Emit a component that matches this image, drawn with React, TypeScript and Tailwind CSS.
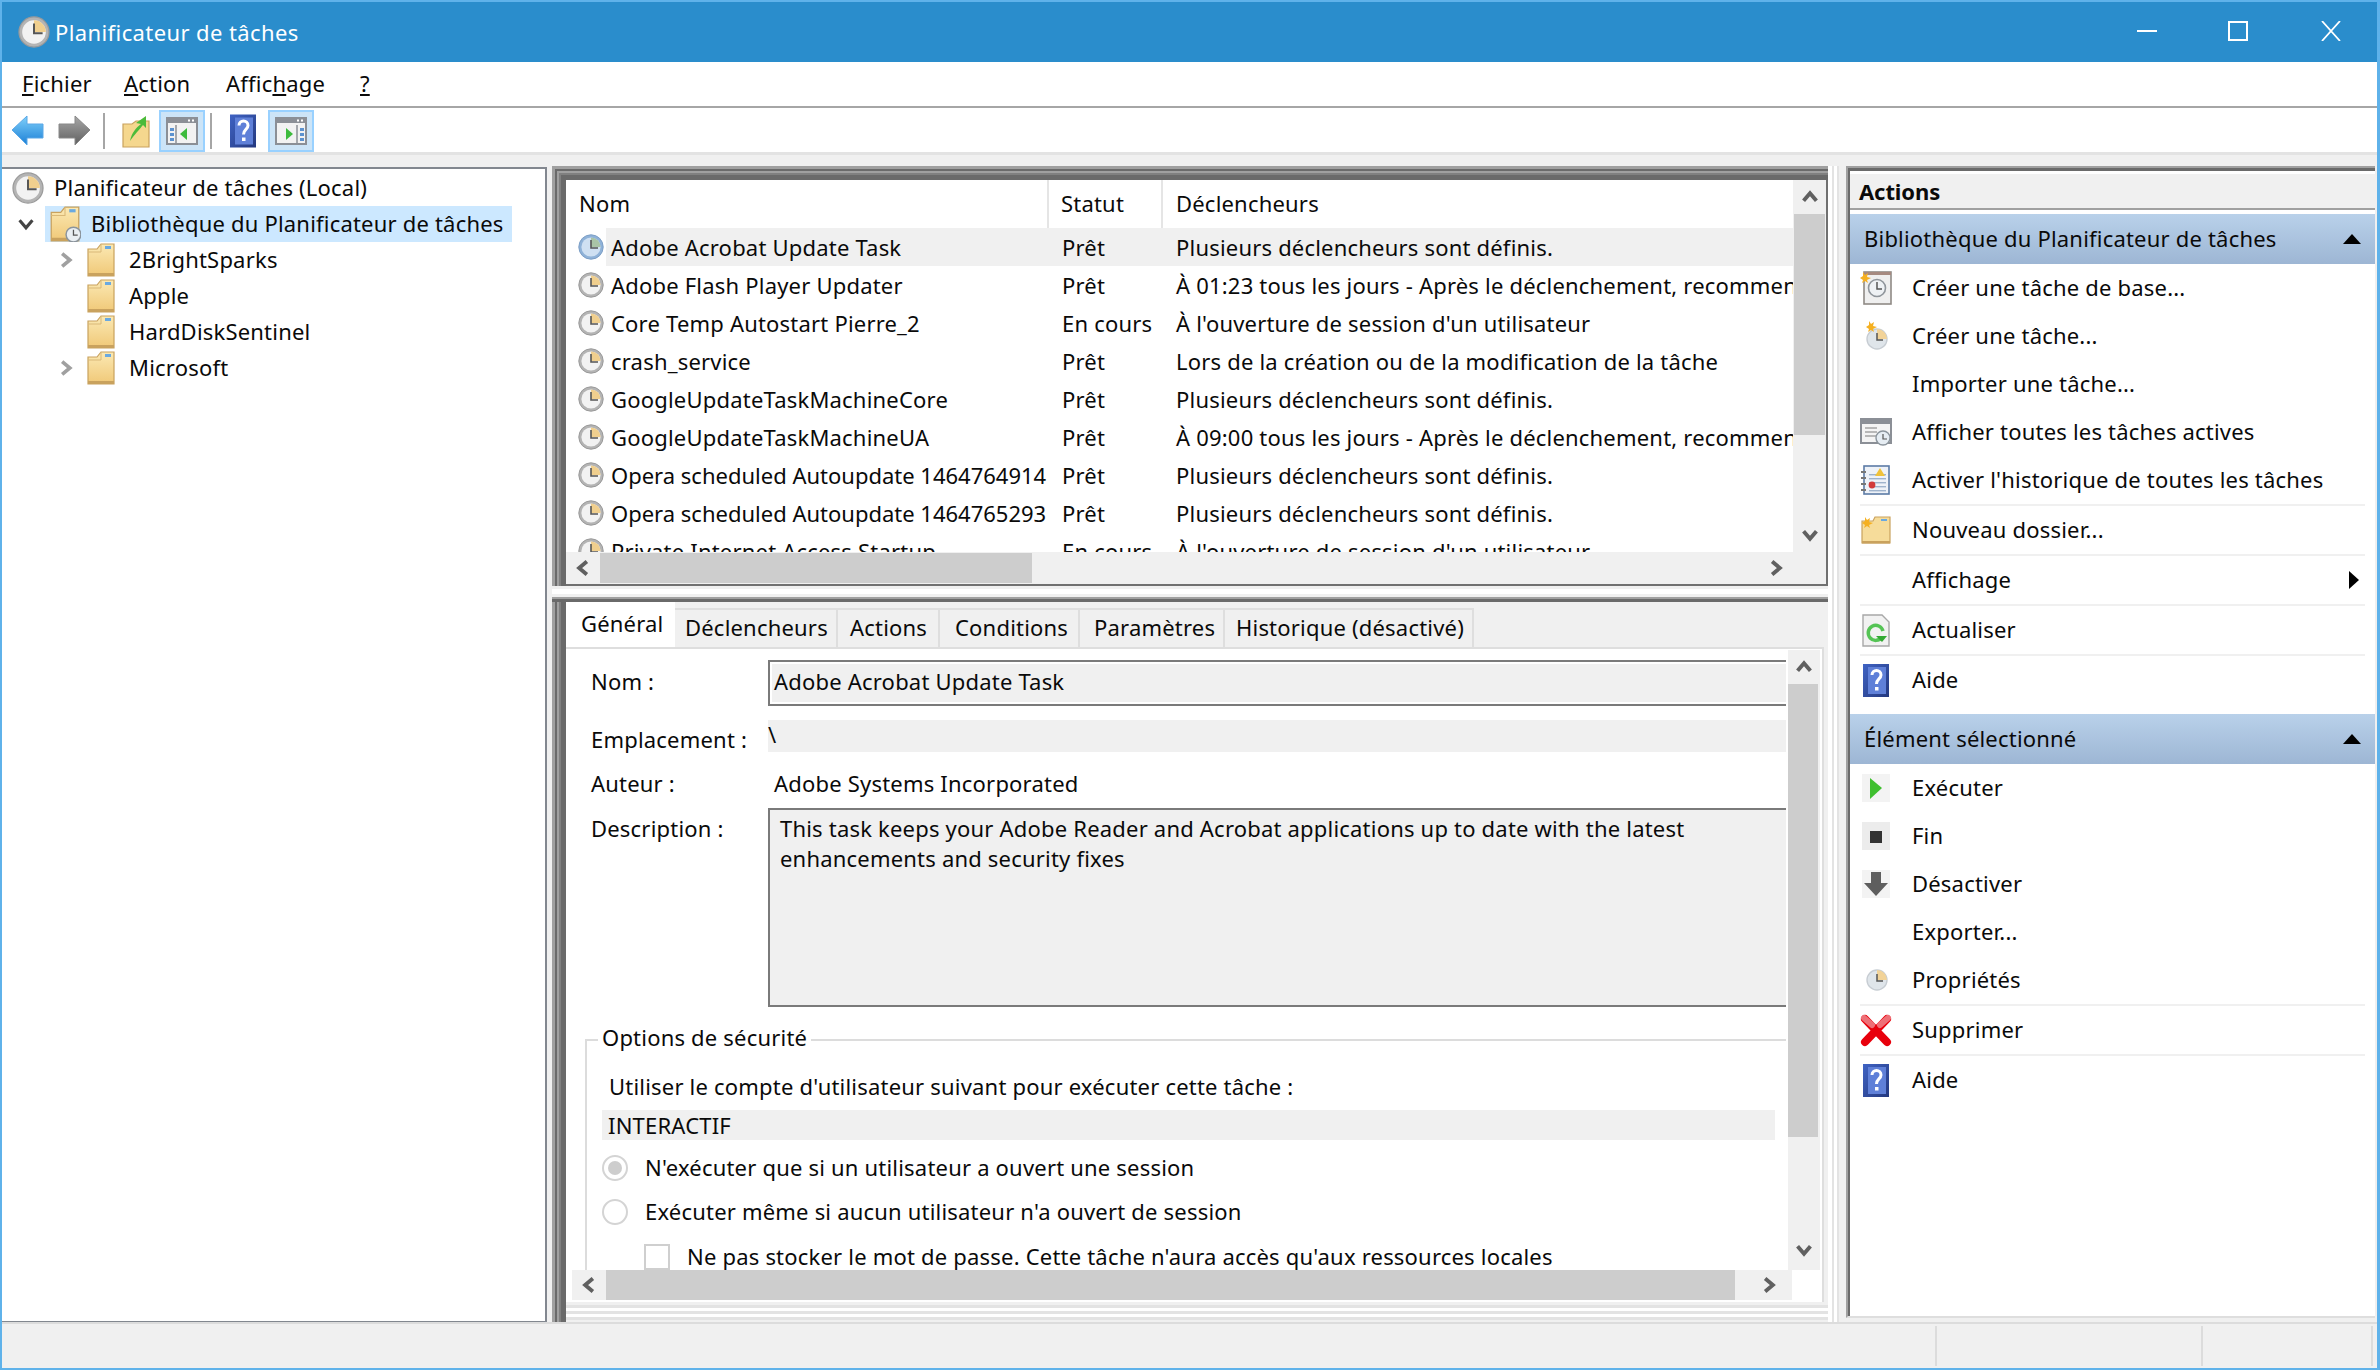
import React from "react";

const Clock = ({ size = 26, blue = false, className = "" }: { size?: number; blue?: boolean; className?: string }) => (
  <svg width={size} height={size} viewBox="0 0 26 26" className={"shrink-0 " + className}>
    <circle cx="13" cy="13" r="12.2" fill={blue ? "#8fb2d8" : "#b4b4b4"} stroke={blue ? "#7d9fc6" : "#9a9a9a"} strokeWidth="1" />
    <circle cx="13" cy="13" r="9.6" fill={blue ? "#cfe0f2" : "#f2f2f2"} />
    <path d="M13 3.4 A9.6 9.6 0 0 1 22.6 13 L13 13 Z" fill={blue ? "#a9c4a6" : "#f0cf8e"} />
    <path d="M13 6 V14 H20" fill="none" stroke="#555" strokeWidth="1.6" />
  </svg>
);

const Folder = ({ w = 28, h = 34, clock = false }: { w?: number; h?: number; clock?: boolean }) => (
  <svg width={w} height={h} viewBox="0 0 28 34" className="shrink-0">
    <defs>
      <linearGradient id="fold" x1="0" y1="0" x2="0" y2="1">
        <stop offset="0" stopColor="#fbe9b4" />
        <stop offset="1" stopColor="#f0c877" />
      </linearGradient>
    </defs>
    <path d="M1 6 L10 6 L14 1 H27 V33 H1 Z" fill="url(#fold)" stroke="#c9a25e" strokeWidth="1.2" />
    <path d="M1 9 L14 9 L14 1" fill="none" stroke="#d9b878" strokeWidth="1" />
    <rect x="18" y="3" width="6" height="3" fill="#6aa9e0" />
    <rect x="1" y="30" width="26" height="3" fill="#c9a25e" />
    {clock && <circle cx="22" cy="27" r="7" fill="#e9eef2" stroke="#8b949c" strokeWidth="1.4" />}
    {clock && <path d="M22 22.5 V27.5 H26" fill="none" stroke="#555" strokeWidth="1.2" />}
  </svg>
);

const HelpIcon = ({ w = 26, h = 33 }: { w?: number; h?: number }) => (
  <svg width={w} height={h} viewBox="0 0 26 33" className="shrink-0">
    <defs>
      <linearGradient id="hb" x1="0" y1="0" x2="1" y2="1">
        <stop offset="0" stopColor="#3f63c4" />
        <stop offset="1" stopColor="#24387e" />
      </linearGradient>
    </defs>
    <rect width="26" height="33" fill="url(#hb)" />
    <rect x="5" y="3" width="18" height="27" fill="#5f80d8" />
    <path d="M9 11 C9 5 18 5 18 11 C18 15 13.5 15 13.5 20" fill="none" stroke="#fff" strokeWidth="3" />
    <rect x="12" y="23" width="3.5" height="3.5" fill="#fff" />
  </svg>
);

const Arrow = ({ dir, blue = false }: { dir: "left" | "right"; blue?: boolean }) => (
  <svg width="32" height="32" viewBox="0 0 32 32" className="shrink-0">
    <defs>
      <linearGradient id="ab" x1="0" y1="0" x2="0" y2="1">
        <stop offset="0" stopColor="#7fd0fa" />
        <stop offset="1" stopColor="#1b7fd6" />
      </linearGradient>
      <linearGradient id="ag" x1="0" y1="0" x2="0" y2="1">
        <stop offset="0" stopColor="#a8a8a8" />
        <stop offset="1" stopColor="#5f5f5f" />
      </linearGradient>
    </defs>
    <path
      d={dir === "left" ? "M0 15 L15 1 V9 H31 V23 H15 V30 Z" : "M32 15 L17 1 V9 H1 V23 H17 V30 Z"}
      fill={blue ? "url(#ab)" : "url(#ag)"}
      stroke={blue ? "#5aa7e6" : "#888"}
      strokeWidth="1"
    />
  </svg>
);

const PaneIcon = ({ flip = false }: { flip?: boolean }) => (
  <svg width="32" height="28" viewBox="0 0 32 28" className="shrink-0">
    <rect x="1" y="1" width="30" height="26" fill="#f2f2f2" stroke="#8b8f96" strokeWidth="2" />
    <rect x="1" y="1" width="30" height="5" fill="#8b8f96" />
    <rect x="22" y="2.5" width="2" height="2" fill="#fff" />
    <rect x="26" y="2.5" width="2" height="2" fill="#fff" />
    <path d={flip ? "M22 8 V26" : "M10 8 V26"} stroke="#8b8f96" strokeWidth="1.5" />
    {[11, 16, 21].map((y) => (
      <rect key={y} x={flip ? 25 : 4} y={y} width="4" height="3" fill="#5c92cf" />
    ))}
    <path d={flip ? "M11 11 L18 17 L11 23 Z" : "M21 11 L14 17 L21 23 Z"} fill="#3dbb3d" />
  </svg>
);

const Chev = ({ dir, size = 14, color = "#606060", w = 3 }: { dir: "up" | "down" | "left" | "right"; size?: number; color?: string; w?: number }) => {
  const p = { up: "M2 10 L7 4 L12 10", down: "M2 4 L7 10 L12 4", left: "M10 2 L4 7 L10 12", right: "M4 2 L10 7 L4 12" }[dir];
  return (
    <svg width={size} height={size} viewBox="0 0 14 14" className="shrink-0">
      <path d={p} fill="none" stroke={color} strokeWidth={w} />
    </svg>
  );
};

const Tree = ({ depth, chev, icon, label, selected }: { depth: number; chev?: "right" | "down"; icon: React.ReactNode; label: string; selected?: boolean }) => (
  <div className="h-[36px] flex items-center">
    {depth === 0 && <div className="w-[10px]" />}
    {depth === 1 && (
      <div className="w-[43px] pl-[15px] flex items-center">
        <Chev dir="down" size={18} color="#444" w={2.4} />
      </div>
    )}
    {depth === 2 && (
      <div className="w-[85px] pl-[55px] flex items-center">
        {chev && <Chev dir="right" size={18} color="#a0a0a0" w={2.8} />}
      </div>
    )}
    <div className={"flex items-center h-[36px] " + (selected ? "bg-[#cce8ff] w-[467px]" : "")}>
      {selected && <div className="w-[4px]" />}
      {icon}
      <span className={"pb-[2px] " + (depth === 2 ? "ml-[14px]" : "ml-[10px]")}>{label}</span>
    </div>
  </div>
);

const tasks = [
  ["Adobe Acrobat Update Task", "Prêt", "Plusieurs déclencheurs sont définis."],
  ["Adobe Flash Player Updater", "Prêt", "À 01:23 tous les jours - Après le déclenchement, recommencer toutes les 1 heure"],
  ["Core Temp Autostart Pierre_2", "En cours", "À l'ouverture de session d'un utilisateur"],
  ["crash_service", "Prêt", "Lors de la création ou de la modification de la tâche"],
  ["GoogleUpdateTaskMachineCore", "Prêt", "Plusieurs déclencheurs sont définis."],
  ["GoogleUpdateTaskMachineUA", "Prêt", "À 09:00 tous les jours - Après le déclenchement, recommencer toutes les 1 heure"],
  ["Opera scheduled Autoupdate 1464764914", "Prêt", "Plusieurs déclencheurs sont définis."],
  ["Opera scheduled Autoupdate 1464765293", "Prêt", "Plusieurs déclencheurs sont définis."],
  ["Private Internet Access Startup", "En cours", "À l'ouverture de session d'un utilisateur"],
];

const Stripes = ({ children, className = "" }: { children: React.ReactNode; className?: string }) => (
  <div className={"border-t-[3px] border-l-[3px] border-[#a0a0a0] " + className}>
    <div className="border-t-2 border-l-2 border-[#6a6a6a] h-full">
      <div className="border-t-2 border-l-2 border-[#a0a0a0] h-full">
        <div className="border-t-2 border-l-2 border-[#808080] h-full">
          <div className="border-t-[5px] border-l-[5px] border-[#6a6a6a] h-full">{children}</div>
        </div>
      </div>
    </div>
  </div>
);

const TaskList = () => (
  <div className="h-[406px] w-[1262px] border-r-2 border-b-2 border-[#707070] flex flex-col bg-[#f0f0f0]">
    <div className="flex h-[372px]">
      <div className="w-[1227px] bg-white overflow-hidden">
        <div className="flex h-[48px] items-center">
          <div className="w-[483px] pl-[13px] pb-[2px] h-full flex items-center border-r-2 border-[#e5e5e5]">Nom</div>
          <div className="w-[114px] pl-[12px] pb-[2px] h-full flex items-center border-r-2 border-[#e5e5e5]">Statut</div>
          <div className="flex-1 pl-[13px] pb-[2px]">Déclencheurs</div>
        </div>
        {tasks.map((t, i) => (
          <div key={t[0]} className="flex h-[38px] items-center whitespace-nowrap overflow-hidden">
            <div className="w-[40px] pl-[12px] flex items-center h-full">
              <Clock blue={i === 0} />
            </div>
            <div className={"flex-1 flex items-center h-full min-w-0 overflow-hidden " + (i === 0 ? "bg-[#f0f0f0]" : "")}>
              <div className={"w-[443px] pl-[5px] shrink-0 " + (i === 6 || i === 7 ? "tracking-[0px]" : "")}>{t[0]}</div>
              <div className="w-[114px] pl-[13px] shrink-0">{t[1]}</div>
              <div className="pl-[13px] shrink-0">{t[2]}</div>
            </div>
          </div>
        ))}
      </div>
      <div className="w-[33px] flex flex-col">
        <div className="h-[34px] flex items-center justify-center"><Chev dir="up" size={18} /></div>
        <div className="h-[221px] bg-[#cdcdcd] mx-[1px]" />
        <div className="flex-1" />
        <div className="h-[34px] flex items-center justify-center"><Chev dir="down" size={18} /></div>
      </div>
    </div>
    <div className="h-[32px] flex items-center">
      <div className="w-[34px] flex items-center justify-center"><Chev dir="left" size={18} /></div>
      <div className="w-[432px] h-[30px] bg-[#cdcdcd]" />
      <div className="w-[735px]" />
      <Chev dir="right" size={18} />
    </div>
  </div>
);

const Tab = ({ label, w, pl }: { label: string; w: number; pl: number }) => (
  <div style={{ width: w, paddingLeft: pl }} className="h-[39px] border-r-2 border-t-2 border-[#dedede] flex items-center pb-[2px] shrink-0">
    {label}
  </div>
);

const Field = ({ className, children }: { className: string; children: React.ReactNode }) => (
  <div className={"flex " + className}>{children}</div>
);

const Radio = ({ on = false }: { on?: boolean }) => (
  <span className="w-[26px] h-[26px] rounded-full border-2 border-[#d4d4d4] flex items-center justify-center shrink-0">
    {on && <span className="w-[14px] h-[14px] rounded-full bg-[#cdcdcd]" />}
  </span>
);

const TaskDetail = () => (
  <div className="h-[721px] w-[1262px] flex flex-col">
    <div className="h-[45px] flex items-end bg-[#f0f0f0] shrink-0">
      <div className="h-[45px] w-[109px] bg-white pl-[15px] pt-[5px] shrink-0">Général</div>
      <Tab label="Déclencheurs" w={163} pl={10} />
      <Tab label="Actions" w={102} pl={12} />
      <Tab label="Conditions" w={140} pl={15} />
      <Tab label="Paramètres" w={145} pl={14} />
      <Tab label="Historique (désactivé)" w={249} pl={11} />
    </div>
    <div className="h-[655px] w-[1258px] bg-white border-t-2 border-r-2 border-[#dedede] flex flex-col shrink-0">
      <div className="flex h-[621px] pt-[1px] shrink-0">
        <div className="w-[1222px] overflow-hidden">
          <Field className="mt-[10px] h-[46px] items-center">
            <div className="w-[202px] pl-[25px] pb-[3px] shrink-0">Nom :</div>
            <div className="w-[1018px] h-[46px] border-t-2 border-b-2 border-l-2 border-[#7a7a7a] p-[2px] pr-0 shrink-0">
              <div className="h-full bg-[#f0f0f0] pl-[2px] pb-[3px] flex items-center">Adobe Acrobat Update Task</div>
            </div>
          </Field>
          <Field className="mt-[14px] h-[32px] items-center">
            <div className="w-[202px] pl-[25px] shrink-0 pt-[6px]">Emplacement :</div>
            <div className="w-[1018px] h-[32px] bg-[#f0f0f0] flex items-center shrink-0 pb-[4px]">\</div>
          </Field>
          <Field className="mt-[16px] h-[32px] items-center">
            <div className="w-[202px] pl-[25px] pb-[2px] shrink-0">Auteur :</div>
            <div className="pl-[6px] pb-[2px]">Adobe Systems Incorporated</div>
          </Field>
          <Field className="mt-[8px] h-[199px]">
            <div className="w-[202px] pl-[25px] pt-[4px] shrink-0">Description :</div>
            <div className="w-[1018px] h-[199px] border-t-2 border-b-2 border-l-2 border-[#7a7a7a] bg-[#f0f0f0] pl-[10px] pt-[3px] leading-[30px] shrink-0">
              This task keeps your Adobe Reader and Acrobat applications up to date with the latest
              <br />
              enhancements and security fixes
            </div>
          </Field>
          <div className="mt-[32px] ml-[19px] w-[1201px] border-t-2 border-l-2 border-[#dcdcdc] relative h-[240px]">
            <div className="absolute left-[11px] -top-[19px] bg-white px-[4px] leading-[30px]">Options de sécurité</div>
            <div className="mt-[30px] ml-[22px] h-[30px] flex items-center">Utiliser le compte d'utilisateur suivant pour exécuter cette tâche :</div>
            <div className="mt-[9px] ml-[15px] w-[1173px] h-[30px] bg-[#f0f0f0] pl-[6px] flex items-center">INTERACTIF</div>
            <div className="mt-[13px] ml-[15px] h-[30px] flex items-center gap-[17px]"><Radio on /><span className="pb-[1px]">N'exécuter que si un utilisateur a ouvert une session</span></div>
            <div className="mt-[14px] ml-[15px] h-[30px] flex items-center gap-[17px]"><Radio /><span className="pb-[1px]">Exécuter même si aucun utilisateur n'a ouvert de session</span></div>
            <div className="mt-[17px] ml-[57px] h-[26px] flex items-center gap-[17px]">
              <span className="w-[26px] h-[26px] border-2 border-[#cfcfcf] shrink-0" />
              <span className="pb-[2px]">Ne pas stocker le mot de passe. Cette tâche n'aura accès qu'aux ressources locales</span>
            </div>
          </div>
        </div>
        <div className="w-[32px] h-[620px] bg-[#f0f0f0] flex flex-col shrink-0">
          <div className="h-[34px] flex items-center justify-center"><Chev dir="up" size={18} /></div>
          <div className="h-[453px] bg-[#cdcdcd] mr-[2px]" />
          <div className="flex-1" />
          <div className="h-[34px] mb-[3px] flex items-center justify-center"><Chev dir="down" size={18} /></div>
        </div>
      </div>
      <div className="h-[30px] flex items-center w-[1220px] bg-[#f0f0f0] ml-[6px] shrink-0">
        <div className="w-[34px] flex justify-center"><Chev dir="left" size={18} /></div>
        <div className="w-[1129px] h-[30px] bg-[#cdcdcd]" />
        <div className="w-[25px]" />
        <Chev dir="right" size={18} />
      </div>
    </div>
    <div className="h-[3px] bg-[#f0f0f0] shrink-0" />
    <div className="h-[3px] bg-[#e3e3e3] shrink-0" />
    <div className="h-[3px] bg-white shrink-0" />
    <div className="h-[3px] bg-[#e3e3e3] shrink-0" />
    <div className="h-[3px] bg-white shrink-0" />
    <div className="h-[3px] bg-[#e3e3e3] shrink-0" />
  </div>
);

const IconBox = ({ children }: { children?: React.ReactNode }) => (
  <div className="w-[32px] h-[34px] flex items-center justify-center shrink-0">{children}</div>
);

const Spark = () => <path d="M3 1 L5 4 L8 2 L7 6 L11 7 L7 9 L8 12 L5 10 L2 12 L3 9 L0 7 L3 5 Z" fill="#f5b021" />;

const IconBase = () => (
  <svg width="32" height="34" viewBox="0 0 32 34">
    <rect x="4" y="1" width="27" height="32" fill="#efefef" stroke="#8f8a85" strokeWidth="1.6" />
    <rect x="4" y="1" width="27" height="3" fill="#a68a80" />
    <circle cx="17" cy="17" r="8.5" fill="#eef1f4" stroke="#8f959b" strokeWidth="1.6" />
    <path d="M17 11 V18 H22" fill="none" stroke="#555" strokeWidth="1.5" />
    <Spark />
  </svg>
);
const IconTask = () => (
  <svg width="32" height="34" viewBox="0 0 32 34">
    <circle cx="17" cy="20" r="10" fill="#dfe5ea" stroke="#c7cdd3" strokeWidth="1.4" />
    <path d="M17 10 A10 10 0 0 1 27 20 L17 20 Z" fill="#f2d398" />
    <path d="M17 14 V21 H23" fill="none" stroke="#555" strokeWidth="1.5" />
    <g transform="translate(6,1)"><Spark /></g>
  </svg>
);
const IconActive = () => (
  <svg width="32" height="28" viewBox="0 0 32 28">
    <rect x="1" y="1" width="30" height="24" fill="#f4f4f4" stroke="#8b8f96" strokeWidth="2" />
    <rect x="1" y="1" width="30" height="5" fill="#8b8f96" />
    {[9, 13, 17].map((y) => <rect key={y} x="5" y={y} width="12" height="2" fill="#b8b8b8" />)}
    <circle cx="23" cy="20" r="7" fill="#e6edf3" stroke="#8b949c" strokeWidth="1.4" />
    <path d="M23 16 V21 H27" fill="none" stroke="#555" strokeWidth="1.2" />
  </svg>
);
const IconLog = () => (
  <svg width="30" height="30" viewBox="0 0 30 30">
    <rect x="3" y="1" width="25" height="28" fill="#eef2f8" stroke="#5c7ba6" strokeWidth="1.6" />
    {[6, 12, 18, 24].map((y) => <rect key={y} x="0" y={y} width="5" height="2" fill="#777" />)}
    {[9, 13, 17, 21, 25].map((y) => <rect key={y} x="8" y={y} width="17" height="1.4" fill="#9fb3cc" />)}
    <path d="M19 3 L24 11 H14 Z" fill="#f0c23a" />
    <circle cx="11" cy="20" r="3.4" fill="#d23b3b" />
  </svg>
);
const IconNewFolder = () => (
  <svg width="30" height="28" viewBox="0 0 30 28">
    <path d="M1 5 H12 L14 1 H29 V27 H1 Z" fill="#f6dc9a" stroke="#c9a25e" strokeWidth="1.2" />
    <rect x="1" y="25" width="28" height="2.5" fill="#c9a25e" />
    <rect x="20" y="3" width="6" height="2" fill="#6aa9e0" />
    <g transform="translate(1,0)"><Spark /></g>
  </svg>
);
const IconRefresh = () => (
  <svg width="28" height="33" viewBox="0 0 28 33">
    <path d="M1 1 H20 L27 8 V32 H1 Z" fill="#f2f2f2" stroke="#a8a8a8" strokeWidth="1.4" />
    <path d="M20 23 A7.5 7.5 0 1 1 21 17" fill="none" stroke="#55c455" strokeWidth="3.5" />
    <path d="M14 22 H25 L20 28 Z" fill="#34aa34" />
  </svg>
);
const IconRun = () => (
  <svg width="28" height="28" viewBox="0 0 28 28">
    <rect width="28" height="28" fill="#f3f3f3" />
    <path d="M8 4 L20 14 L8 25 Z" fill="#3fbf2f" />
  </svg>
);
const IconStop = () => (
  <svg width="28" height="28" viewBox="0 0 28 28">
    <rect width="28" height="28" fill="#ececec" />
    <rect x="8" y="9" width="12" height="12" fill="#333" />
  </svg>
);
const IconDisable = () => (
  <svg width="28" height="28" viewBox="0 0 28 28">
    <rect width="28" height="28" fill="#f3f3f3" />
    <path d="M9 2 H19 V13 H26 L14 26 L2 13 H9 Z" fill="#5e5e5e" />
  </svg>
);
const IconProps = () => (
  <svg width="32" height="32" viewBox="0 0 32 32">
    <circle cx="17" cy="16" r="10" fill="#dfe5ea" stroke="#c7cdd3" strokeWidth="1.4" />
    <path d="M17 6 A10 10 0 0 1 27 16 L17 16 Z" fill="#f2d398" />
    <path d="M17 10 V17 H23" fill="none" stroke="#555" strokeWidth="1.5" />
  </svg>
);
const IconDelete = () => (
  <svg width="32" height="33" viewBox="0 0 32 33">
    <path d="M5 5 L27 28 M27 5 L5 28" stroke="#e8000c" strokeWidth="8" strokeLinecap="round" />
    <path d="M4 4 L12 11 M28 4 L20 11" stroke="#ee7077" strokeWidth="6" strokeLinecap="round" />
  </svg>
);

const Action = ({ icon, label, sep, arrow }: { icon?: React.ReactNode; label: string; sep?: boolean; arrow?: boolean }) => (
  <div className={"ml-[10px] mr-[10px] flex items-center " + (sep ? "h-[50px] border-b-2 border-[#f0f0f0]" : "h-[48px]")}>
    <IconBox>{icon}</IconBox>
    <span className="ml-[20px] flex-1 pb-[2px]">{label}</span>
    {arrow && (
      <svg width="10" height="18" viewBox="0 0 10 18" className="mr-[6px]">
        <path d="M0 0 L10 9 L0 18 Z" fill="#000" />
      </svg>
    )}
  </div>
);

const GroupHead = ({ label }: { label: string }) => (
  <div className="h-[50px] flex items-center justify-between pl-[14px] pr-[14px] bg-gradient-to-b from-[#b9d1ea] to-[#9db6d4]">
    <span className="pb-[2px]">{label}</span>
    <svg width="18" height="10" viewBox="0 0 18 10"><path d="M0 10 L9 0 L18 10 Z" fill="#000" /></svg>
  </div>
);

export default function App() {
  return (
    <div className="w-[2380px] h-[1370px] overflow-hidden flex flex-col bg-[#f0f0f0] border-t-2 border-l-2 border-r-[3px] border-b-2 border-[#5fb2ea] text-[#0a0a0a] text-[22px] font-['Noto_Sans','Liberation_Sans',sans-serif] tracking-[0.2px]">
      <div className="h-[60px] bg-[#2a8dcc] flex items-center text-white shrink-0">
        <div className="w-[16px]" />
        <Clock size={32} />
        <span className="ml-[5px] tracking-[0.4px] pt-[1px]">Planificateur de tâches</span>
        <div className="flex-1" />
        <svg width="20" height="2" viewBox="0 0 20 2" className="mr-[71px] mb-[2px]"><rect width="20" height="2" fill="#fff" /></svg>
        <svg width="20" height="20" viewBox="0 0 20 20" className="mr-[73px] mb-[2px]"><rect x="1" y="1" width="18" height="18" fill="none" stroke="#fff" strokeWidth="2" /></svg>
        <svg width="20" height="20" viewBox="0 0 20 20" className="mr-[36px] mb-[2px]"><path d="M1 0 L19 20 M19 0 L1 20" stroke="#fff" strokeWidth="1.8" /></svg>
      </div>
      <div className="h-[46px] bg-white border-b-2 border-[#a6a6a6] flex items-center pl-[20px] pb-[2px] shrink-0">
        <span className="w-[102px]"><u>F</u>ichier</span>
        <span className="w-[102px]"><u>A</u>ction</span>
        <span className="w-[134px]">Affic<u>h</u>age</span>
        <span><u>?</u></span>
      </div>
      <div className="h-[47px] pt-[2px] bg-white border-b-[3px] border-[#e3e3e3] flex items-center pl-[10px] shrink-0">
        <Arrow dir="left" blue />
        <div className="w-[14px]" />
        <Arrow dir="right" />
        <div className="w-[2px] h-[36px] bg-[#a6a6a6] ml-[13px] mr-[17px]" />
        <svg width="28" height="34" viewBox="0 0 28 34">
          <path d="M1 10 H10 L14 7 H27 V33 H1 Z" fill="#f5d78e" stroke="#c9a25e" strokeWidth="1.2" />
          <path d="M8 27 C10 18 14 14 19 10 L14 9 L24 2 L24 14 L21 11 C17 16 13 20 8 27 Z" fill="#4cbb3a" />
        </svg>
        <div className="ml-[9px] w-[46px] h-[42px] bg-[#cce4f7] border-2 border-[#99d1ff] flex items-center justify-center"><PaneIcon /></div>
        <div className="w-[2px] h-[36px] bg-[#a6a6a6] ml-[5px] mr-[18px]" />
        <HelpIcon w={26} h={36} />
        <div className="ml-[12px] w-[46px] h-[42px] bg-[#cce4f7] border-2 border-[#99d1ff] flex items-center justify-center"><PaneIcon flip /></div>
      </div>

      <div className="flex-1 min-h-0 flex pt-[11px]">
        <div className="w-[545px] h-[1156px] mt-[1px] bg-white border-t-2 border-r-2 border-b-2 border-[#82878f] pt-[1px] whitespace-nowrap">
          <Tree depth={0} icon={<Clock size={32} />} label="Planificateur de tâches (Local)" />
          <Tree depth={1} icon={<Folder w={32} h={36} clock />} label="Bibliothèque du Planificateur de tâches" selected />
          <Tree depth={2} chev="right" icon={<Folder />} label="2BrightSparks" />
          <Tree depth={2} icon={<Folder />} label="Apple" />
          <Tree depth={2} icon={<Folder />} label="HardDiskSentinel" />
          <Tree depth={2} chev="right" icon={<Folder />} label="Microsoft" />
        </div>

        <div className="ml-[5px] w-[1294px] h-[1157px] flex">
          <div className="w-[1276px] flex flex-col">
            <Stripes className="h-[420px]">
              <TaskList />
            </Stripes>
            <div className="h-[11px] bg-white border-y-[3px] border-[#f0f0f0]" />
            <div className="border-t-[2px] border-[#a0a0a0]">
              <div className="border-t-[3px] border-[#6a6a6a] flex">
                <div className="w-[14px] h-[721px] border-l-[3px] border-[#a0a0a0]">
                  <div className="h-full border-l-2 border-[#6a6a6a]">
                    <div className="h-full border-l-2 border-[#a0a0a0]">
                      <div className="h-full border-l-[2px] border-[#808080]">
                        <div className="h-full border-l-[5px] border-[#6a6a6a]" />
                      </div>
                    </div>
                  </div>
                </div>
                <TaskDetail />
              </div>
            </div>
          </div>
          <div className="flex-1 flex">
            <div className="w-[4px] bg-white" />
            <div className="w-[2px] bg-[#e3e3e3]" />
            <div className="w-[3px] bg-white" />
            <div className="w-[2px] bg-[#e3e3e3]" />
            <div className="flex-1" />
          </div>
        </div>

        <div className="w-[529px] h-[1152px] border-t-2 border-l-2 border-[#a0a0a0] border-b-2 border-b-[#dedede]">
          <div className="h-full border-t-[3px] border-l-2 border-[#6a6a6a] flex flex-col">
            <div className="h-[3px] bg-white" />
            <div className="h-[36px] shrink-0 border-b-2 border-[#a0a0a0] flex items-center pl-[9px] font-bold text-[22px] tracking-[-0.1px]">Actions</div>
            <div className="h-[4px] bg-white shrink-0" />
            <div className="flex-1 bg-white">
              <GroupHead label="Bibliothèque du Planificateur de tâches" />
              <Action icon={<IconBase />} label="Créer une tâche de base..." />
              <Action icon={<IconTask />} label="Créer une tâche..." />
              <Action label="Importer une tâche..." />
              <Action icon={<IconActive />} label="Afficher toutes les tâches actives" />
              <Action icon={<IconLog />} label="Activer l'historique de toutes les tâches" sep />
              <Action icon={<IconNewFolder />} label="Nouveau dossier..." sep />
              <Action label="Affichage" sep arrow />
              <Action icon={<IconRefresh />} label="Actualiser" sep />
              <Action icon={<HelpIcon w={26} h={33} />} label="Aide" />
              <div className="h-[10px]" />
              <GroupHead label="Élément sélectionné" />
              <Action icon={<IconRun />} label="Exécuter" />
              <Action icon={<IconStop />} label="Fin" />
              <Action icon={<IconDisable />} label="Désactiver" />
              <Action label="Exporter..." />
              <Action icon={<IconProps />} label="Propriétés" sep />
              <Action icon={<IconDelete />} label="Supprimer" sep />
              <Action icon={<HelpIcon w={26} h={33} />} label="Aide" />
            </div>
          </div>
        </div>
      </div>

      <div className="h-[46px] border-t-2 border-[#dcdcdc] flex items-center shrink-0">
        <div className="w-[1935px] h-[40px] border-r-2 border-[#dcdcdc]" />
        <div className="w-[266px] h-[40px] border-r-2 border-[#dcdcdc]" />
        <div className="w-[170px] h-[40px] border-r-2 border-[#dcdcdc]" />
      </div>
    </div>
  );
}
